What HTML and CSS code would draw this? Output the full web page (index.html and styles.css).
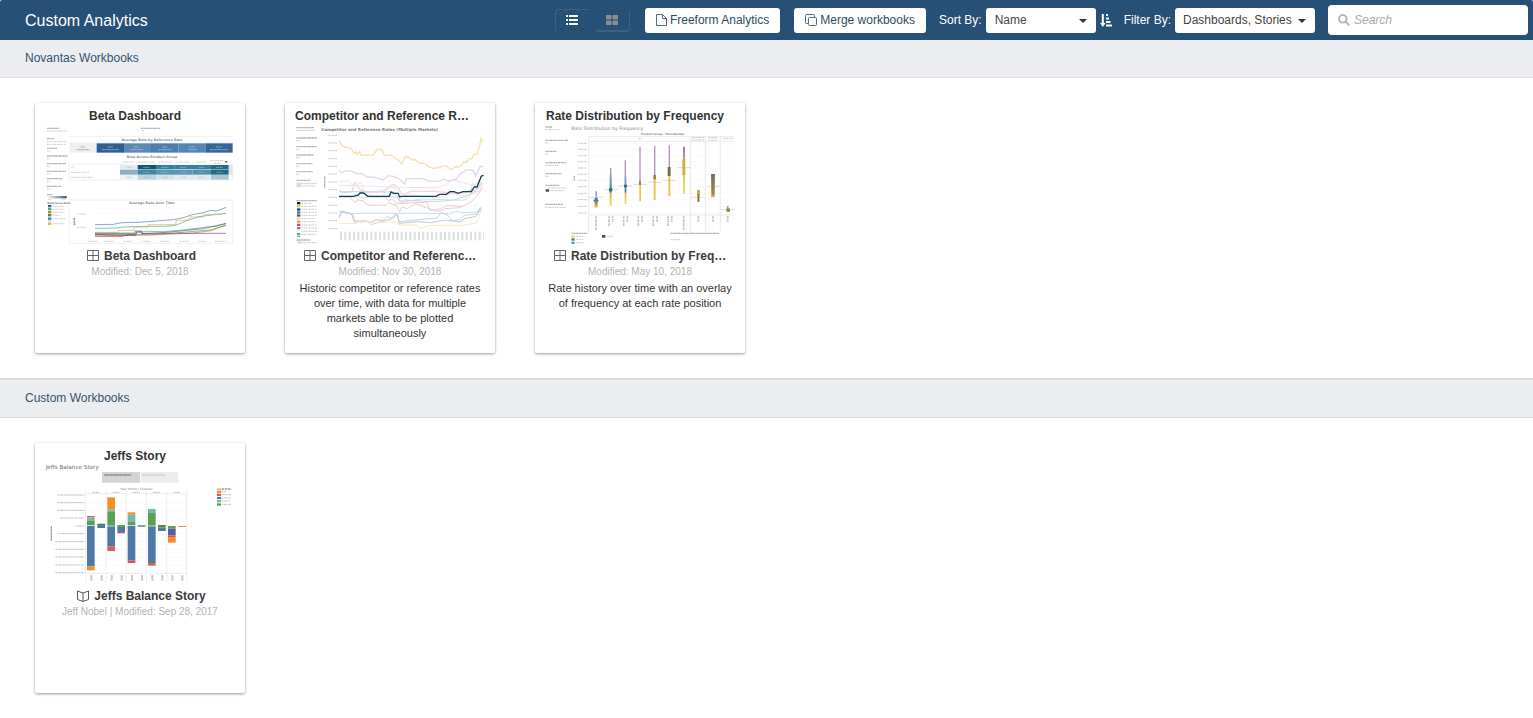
FILE: index.html
```html
<!DOCTYPE html>
<html lang="en">
<head>
<meta charset="utf-8">
<title>Custom Analytics</title>
<link rel="stylesheet" href="styles.css">
</head>
<body>
<header class="topbar">
  <h1 class="page-title">Custom Analytics</h1>
  <div class="view-toggle">
    <button class="toggle active" type="button" aria-label="List view">
      <svg width="12" height="10" viewBox="0 0 12 10" fill="#fff"><path d="M0 0h2v2H0zM3 0h9v2H3zM0 4h2v2H0zM3 4h9v2H3zM0 8h2v2H0zM3 8h9v2H3z"/></svg>
    </button>
    <button class="toggle" type="button" aria-label="Grid view">
      <svg width="12" height="10" viewBox="0 0 12 10" fill="#8c8f91"><rect width="5.5" height="4.5" rx=".7"/><rect x="6.5" width="5.5" height="4.5" rx=".7"/><rect y="5.500" width="5.500" height="4.500" rx=".7"/><rect x="6.500" y="5.500" width="5.500" height="4.500" rx=".7"/></svg>
    </button>
  </div>
  <button class="action freeform" type="button">
    <svg width="11" height="12" viewBox="0 0 11 12" fill="none" stroke="#526b82"><path d="M.5.500H6.500L10.500 4.500V11.500H.5zM6.500.500V4.500H10.500"/></svg>
    Freeform Analytics
  </button>
  <button class="action" type="button">
    <svg width="12" height="12" viewBox="0 0 12 12" fill="none" stroke="#526b82"><path d="M3 9.500H1.500a1 1 0 0 1-1-1V1.500a1 1 0 0 1 1-1H8.500a1 1 0 0 1 1 1V3"/><rect x="3.500" y="3.500" width="8" height="8" rx="1"/></svg>
    Merge workbooks
  </button>
  <div class="field">
    <label for="sort">Sort By:</label>
    <span class="picker sort">
      <select id="sort"><option>Name</option></select>
      <svg class="caret" width="8" height="4" viewBox="0 0 8 4" fill="#333"><path d="M0 0h8L4 4z"/></svg>
    </span>
    <button class="order" type="button" aria-label="Sort ascending">
      <svg width="12" height="13" viewBox="0 0 12 13" fill="#fff"><path d="M1.800 0h2v9h1.900L2.800 13 0 9h1.800zM6 0h2v2H6zM6 3.500h3v2H6zM6 7h4.500v2H6zM6 10.500h6v2H6z"/></svg>
    </button>
  </div>
  <div class="field filter-field">
    <label for="filter">Filter By:</label>
    <span class="picker filter">
      <select id="filter"><option>Dashboards, Stories</option></select>
      <svg class="caret" width="8" height="4" viewBox="0 0 8 4" fill="#333"><path d="M0 0h8L4 4z"/></svg>
    </span>
  </div>
  <label class="search">
    <svg width="12" height="12" viewBox="0 0 12 12" fill="none" stroke="#b5b5b5" stroke-width="2"><circle cx="4.800" cy="4.800" r="3.800"/><path d="M7.600 7.600L11.200 11.200"/></svg>
    <input type="text" placeholder="Search" aria-label="Search">
  </label>
</header>

<main>
<section>
  <h2 class="section-title">Novantas Workbooks</h2>
  <div class="cards">

    <article class="card">
      <h3 class="card-title">Beta Dashboard</h3>
      <svg class="thumb" viewBox="45 87 570 360" role="img" aria-label="Beta Dashboard preview">
        <g fill="none" stroke="#e8e8e8" stroke-width="2"><path d="M117 122H608M117 204H608V252H117zM117 312H608V442H117zM117 141H608"/></g>
        <g fill="none" stroke="#8b8b8b" stroke-width="4" stroke-dasharray="7 1 4 1 9 1" opacity=".65">
          <path d="M51 97H88M51 128H72M51 157H81M51 180H113M51 203H108M51 226H108M51 248H98M51 271H94M51 296H68M333 97H392"/>
        </g>
        <g fill="none" stroke="#aaa" stroke-width="3" stroke-dasharray="5 2 3 1" opacity=".6">
          <path d="M51 105H113M51 137H110M51 145H108M51 165H61M51 188H61M51 211H61M51 234H61M51 256H61M51 279H61M55 310H66M95 310H108M336 104H343"/>
          <path d="M123 213H135M123 229H178M123 244H191M278 198H314M324 198H375M386 198H425M440 198H479M500 198H529M541 194H585M553 202H572"/>
          <path d="M68 331H102M68 340H103M68 349H104M68 358H91M68 368H105M68 383H102M142 354H168M142 394H168"/>
          <path d="M175 436H202M221 436H254M280 436H306M334 436H362M389 436H416M448 436H475M504 436H528M555 436H590"/>
        </g>
        <g class="micro heading"><text x="275" y="136">Average Beta by Reference Rate</text><text x="290" y="186">Beta Across Product Group</text><text x="297" y="325">Average Rate Over Time</text></g>
        <path fill="#efefef" d="M118 142H200V170H118z"/><path fill="#2f5f91" d="M200 142H282V170H200z"/><path fill="#5b88b5" d="M282 142H363V170H282z"/><path fill="#4f7ead" d="M363 142H445V170H363z"/><path fill="#5785b3" d="M445 142H526V170H445z"/><path fill="#336596" d="M526 142H608V170H526z"/>
        <path d="M152 153H166M140 161H179" stroke="#aaa" stroke-width="3" stroke-dasharray="6 1"/>
        <path d="M232 153H248M216 161H267M312 153H328M302 161H340M396 153H412M385 161H425M478 153H494M475 161H500M558 153H576M540 161H594" stroke="#c9d8e7" stroke-width="3" stroke-dasharray="6 1" opacity=".6"/>
        <path fill="#e3ebf1" d="M270 207H323V220H270z"/><path fill="#12566f" d="M323 207H378V220H323z"/><path fill="#2f7f9e" d="M378 207H433V220H378z"/><path fill="#397f9f" d="M433 207H543V220H433z"/><path fill="#236b87" d="M543 207H596V220H543z"/>
        <path fill="#8caec2" d="M270 221H323V236H270z"/><path fill="#4285a5" d="M323 221H378V236H323z"/><path fill="#5b97b4" d="M378 221H488V236H378z"/><path fill="#4f8fac" d="M488 221H543V236H488z"/><path fill="#1d6a88" d="M543 221H596V236H543z"/>
        <path fill="#edf1f5" d="M270 237H323V251H270z"/><path fill="#bdd3df" d="M323 237H378V251H323z"/><path fill="#d5e2ea" d="M378 237H433V251H378z"/><path fill="#e0e9ee" d="M433 237H543V251H433z"/><path fill="#a9c6d5" d="M543 237H596V251H543z"/>
        <path d="M289 214H305M340 214H360M394 214H416M450 214H470M505 214H525M559 214H579M289 229H305M340 229H360M394 229H416M450 229H470M505 229H525M559 229H579M289 244H305M340 244H360M396 244H414M452 244H468M506 244H524M559 244H579" stroke="#a8bbc7" stroke-width="3" stroke-dasharray="4 1" opacity=".7"/>
        <path fill="#e5e5e5" d="M597 206H607V237H597z"/><path fill="#777" d="M585 195H592V200H585z"/>
        <defs><linearGradient id="ramp"><stop stop-color="#f1f1f1"/><stop offset="1" stop-color="#3a587c"/></linearGradient></defs>
        <path fill="url(#ramp)" d="M54 300H110V307H54z"/><text class="micro small" x="52" y="324">Reference Rate</text>
        <path fill="#31648c" d="M54 327H64V334H54z"/><path fill="#47ad75" d="M54 336H64V343H54z"/><path fill="#81992d" d="M54 345H64V352H54z"/><path fill="#966253" d="M54 354H64V361H54z"/><path fill="#2b9ccb" d="M54 364H64V372H54z"/><path fill="#a7d4e8" d="M54 373H64V376H54z"/><path fill="#f1b53d" d="M54 379H64V387H54z"/>
        <path d="M133 366V390" stroke="#999" stroke-width="5" stroke-dasharray="6 2"/>
        <path d="M195 352H595M195 390H595" stroke="#eee"/>
        <g fill="none" stroke-width="2">
          <path stroke="#5579b5" d="M195 386L250 385 276 380 324 379 380 375 430 371 460 365 487 356 520 350 543 343 560 345 588 334"/>
          <path stroke="#35a9b9" d="M195 397L260 396 280 393 354 391 405 391 437 388 470 374 507 362 544 357 588 352"/>
          <path stroke="#e8ad3c" d="M195 409H265V403H312V393H354V386H400L438 385V373H475L480 363H520V356H540L588 353"/>
          <path stroke="#db7650" d="M195 421H275L285 418 360 417 480 412 545 404 588 387"/>
          <path stroke="#b34449" d="M195 420H280L290 416H318"/>
          <path stroke="#7b8b33" d="M195 416H320L370 416 470 408 540 402 588 388"/>
          <path stroke="#49a776" d="M195 411H320L350 406 400 407 460 402 530 393 560 391 588 383"/>
          <path stroke="#38669a" d="M195 413H315V405H335V413L380 411 420 408 470 403 520 398 588 382"/>
          <path stroke="#753e8f" d="M195 415L260 418 318 418 320 407 334 407 336 412 500 412 588 412"/>
        </g>
      </svg>
      <div class="card-name">
        <svg width="12" height="12" viewBox="0 0 12 12" fill="none" stroke="#666"><path d="M.5.500H11.500V10.500H.5zM6 .5V10.500M.5 5.500H11.500"/></svg>
        <span>Beta Dashboard</span>
      </div>
      <p class="modified">Modified: Dec 5, 2018</p>
    </article>

    <article class="card">
      <h3 class="card-title">Competitor and Reference Rates (Multiple Markets)</h3>
      <svg class="thumb" viewBox="45 87 570 360" role="img" aria-label="Competitor and Reference Rates preview">
        <text class="micro wide" x="124" y="104">Competitor and Reference Rates (Multiple Markets)</text>
        <g fill="none" stroke="#8b8b8b" stroke-width="4" stroke-dasharray="7 1 4 1 9 1" opacity=".65"><path d="M49 95H103M49 126H111M49 152H111M49 177H100M49 203H97M49 227H98M49 253H91M49 314H111M49 432H91M134 241V277"/></g>
        <g fill="none" stroke="#999" stroke-width="3" stroke-dasharray="5 2 3 1" opacity=".55"><path d="M49 103H106M49 134H60M49 160H60M49 185H60M49 211H60M49 235H60M63 263H111M63 270H107M65 322H96M65 331H110M65 340H108M65 349H110M65 358H111M65 368H104M65 377H107M65 387H108M65 396H111M65 406H111M65 415H109M63 440H111M145 118H171M145 141H171M145 164H171M145 188H171M145 211H171M145 234H171M145 258H171M145 281H171M145 304H171M145 328H171M145 351H171M145 374H171M145 398H171"/></g>
        <path fill="#fff" stroke="#888" d="M51 261H61V266H51zM51 268H61V272H51zM54 437H61V442H54z"/>
        <path fill="#111e2c" d="M51 318H61V325H51z"/><path fill="#e9c447" d="M51 327H61V334H51z"/><path fill="#224c6d" d="M51 337H61V344H51z"/><path fill="#357aab" d="M51 346H61V353H51z"/><path fill="#525970" d="M51 355H61V362H51z"/><path fill="#f4c5a3" d="M51 365H61V371H51z"/><path fill="#ec8e3c" d="M51 374H61V380H51z"/><path fill="#d74458" d="M51 383H61V390H51z"/><path fill="#8c7898" d="M51 393H61V400H51z"/><path fill="#39b4a6" d="M51 411H61V418H51z"/><path fill="#c58fa5" d="M51 420H61V423H51z"/>
        <path d="M176 118H611M176 141H611M176 164H611M176 188H611M176 211H611M176 234H611M176 258H611M176 281H611M176 304H611M176 328H611M176 351H611M176 374H611M176 398H611" stroke="#f4f4f4"/>
        <g fill="none" stroke-width="4">
          <path stroke="#f4e0ae" d="M177 134L186 149 197 154 213 156 222 172 228 168 231 176 238 168 243 177 280 178 291 160H306L313 178H334L344 186 356 193 365 204 375 183H386L395 192 405 191 418 201 434 202 450 214 463 217 498 209 514 222 521 216 528 213H536L546 207 550 198H560L568 188H576L582 174 590 176 599 150 603 127 609 137"/>
          <path stroke="#dddbec" d="M177 223L186 230 197 224 217 226 230 233H245L262 243 285 244 310 252 325 239 340 241 359 249 374 264 379 248H400L425 247 448 255 475 256 490 250 508 255 528 250 543 232 561 221 579 223 587 239 601 211 609 212"/>
          <path stroke="#f0d5dc" d="M177 287H217L223 260 239 280 255 288H280L310 285 326 275 333 268 343 266 355 275 364 292 375 295 390 286H462L520 291 559 290 572 281 582 286 592 277 604 257"/>
          <path stroke="#efe4ea" stroke-width="3" d="M177 256L205 255 217 266 244 262 252 286 274 301H307L321 277 332 271 348 280 367 302 390 295 422 302 480 304 515 294 547 299 583 294 598 285 609 265M177 268L260 270 350 274 475 275 504 263 515 250 568 266 608 260"/>
          <path stroke="#f2c8cd" stroke-width="3" d="M177 304H210L226 321 231 311 250 315 260 327 316 328 326 320 339 325 350 329 359 348 366 332 382 338 405 323 445 337 460 344 480 346 494 338 540 335 574 317 592 298 608 274M315 301L325 314 337 309 349 323 440 318 450 343 480 339 500 328 548 331"/>
          <path stroke="#c6e1e8" stroke-width="3" d="M177 346L205 353 252 352 320 352H440L505 353 527 346 553 350 590 348 606 335M177 303H354L364 319 422 309 478 311 550 313 570 301 577 263 590 271 605 239"/>
          <path stroke="#c3d7e4" stroke-width="3" d="M177 284L190 290 220 287 260 287 310 288 343 288 360 318 372 312 440 316 480 316 520 312 560 300 576 290 590 286 606 262M177 368L185 345 217 354 225 376 233 373 243 379 259 373 274 386 308 376 320 362 335 366 343 356 353 355 358 378 386 374 433 369 470 367 485 349 505 359 516 374 540 371 552 358 590 354 602 333"/>
          <path stroke="#c6c8d2" stroke-width="3" d="M178 361L185 347 214 353 224 380 246 374 272 379 288 371 309 375 334 369 351 356 358 382 411 377 452 380 497 372 540 378 554 368 588 361 603 338"/>
          <path stroke="#f8e5ca" stroke-width="3" d="M177 382H225L246 373 270 379 350 378 357 387H408L419 397 452 388H552L590 381 603 344 609 338"/>
          <path stroke="#173d5c" d="M177 301H221L229 298 234 298 240 291H251L263 301H328L333 288 341 292H354L359 303 364 301H468L479 295H499L510 287H522L534 292 549 287H574L583 273H591L599 253 604 240 611 238"/>
        </g>
        <path d="M180 420H611" stroke="#bbb" stroke-width="26" stroke-dasharray="6 7" opacity=".55"/>
        <path d="M180 413H611M180 421H611M180 429H611" stroke="#fff" stroke-width="1"/>
      </svg>
      <div class="card-name">
        <svg width="12" height="12" viewBox="0 0 12 12" fill="none" stroke="#666"><path d="M.5.500H11.500V10.500H.5zM6 .5V10.500M.5 5.500H11.500"/></svg>
        <span>Competitor and Reference Rates</span>
      </div>
      <p class="modified">Modified: Nov 30, 2018</p>
      <p class="description">Historic competitor or reference rates over time, with data for multiple markets able to be plotted simultaneously</p>
    </article>

    <article class="card">
      <h3 class="card-title">Rate Distribution by Frequency</h3>
      <svg class="thumb" viewBox="45 87 570 360" role="img" aria-label="Rate Distribution by Frequency preview">
        <defs>
          <linearGradient id="mix" x2="0" y2="1"><stop stop-color="#bca0c7"/><stop offset=".33" stop-color="#4b9aba"/><stop offset=".55" stop-color="#3f728c"/><stop offset=".6" stop-color="#e0b440"/><stop offset="1" stop-color="#f6db79"/></linearGradient>
          <linearGradient id="high" x2="0" y2="1"><stop stop-color="#a77aac"/><stop offset=".25" stop-color="#b98fa0"/><stop offset=".3" stop-color="#e0b440"/><stop offset="1" stop-color="#f6db79"/></linearGradient>
          <linearGradient id="low" x2="0" y2="1"><stop stop-color="#6c7d6a"/><stop offset=".3" stop-color="#b08e48"/><stop offset="1" stop-color="#efc955"/></linearGradient>
        </defs>
        <text class="micro large" x="124" y="102">Rate Distribution by Frequency</text>
        <text class="micro small" x="333" y="116">Product Group / Term Bucket</text>
        <path fill="none" stroke="#dedede" stroke-width="2" d="M176 122H611M176 136H611M176 357H611M176 122V405M482 122V405M526 122V405M571 122V405"/>
        <path d="M176 142H611M176 160H611M176 179H611M176 197H611M176 216H611M176 235H611M176 253H611M176 272H611M176 292H611M176 311H611M176 331H611M176 351H611" stroke="#f0f0f0"/>
        <g fill="none" stroke="#8b8b8b" stroke-width="4" stroke-dasharray="7 1 4 1 9 1" opacity=".65"><path d="M46 93H66M46 133H114M46 166H80M46 200H109M46 233H95M46 268H88M46 325H99M124 412H173M421 412H568M133 239V254"/></g>
        <g fill="none" stroke="#999" stroke-width="3" stroke-dasharray="5 2 3 1" opacity=".55"><path d="M46 101H89M46 141H57M46 174H57M46 208H85M46 241H57M55 276H110M58 284H104M46 334H109M138 421H161M138 430H161M138 440H161M230 421H250M423 431H450M326 128H336M486 125H522M486 132H522M535 125H562M535 132H562M578 128H610M143 142H172M143 160H172M143 179H172M143 197H172M143 216H172M143 235H172M143 253H172M143 272H172M143 292H172M143 311H172M143 331H172M143 351H172"/></g>
        <path fill="#464b50" d="M47 280H57V287H47zM216 417H226V425H216z"/><path fill="#f1d580" d="M124 418H134V425H124z"/><path fill="#617b70" d="M124 427H134V434H124z"/><path fill="#38a4c7" d="M124 437H134V444H124z"/>
        <path fill="#a8a4c6" d="M196 286H201V311H196z"/><path fill="#52758a" d="M194 306H203V311H194zM191 311H205V317H191z"/><path fill="url(#low)" d="M194 317H203V335H194z"/>
        <g fill="none" stroke="#b48fba" stroke-width="4"><path d="M242 216V260M286 193V260M330 152V260M374 149V240M418 148V215"/></g>
        <path fill="url(#mix)" d="M239 235H245V330H239zM284 240H289V325H284z"/><path fill="#315971" d="M237 277H247V285H237zM282 266H291V274H282z"/>
        <path fill="#eec451" d="M328 264H333V316H328zM371 247H377V312H371zM415 238H421V300H415z"/><path fill="#9c853d" d="M327 254H333V267H327zM370 237H378V250H370z"/><path fill="#727347" d="M413 213H422V240H413z"/>
        <path fill="url(#high)" d="M459 152H465V294H459z"/><path fill="#d5af46" d="M457 189H466V237H457z"/><path fill="url(#low)" d="M501 282H510V318H501zM543 234H555V304H543z"/><path stroke="#466a7d" stroke-width="3" d="M549 236V298M505 294V317"/><path fill="#50797d" d="M592 330H595V338H592z"/><path fill="#888052" d="M589 337H600V347H589z"/>
        <path d="M176 304H217M222 280H263M265 270H306M309 265H351M354 259H395M399 253H438M442 215H482M484 304H523M530 271H569M572 341H614" stroke="#999"/>
        <path d="M198 361V403M237 361V390M248 361V377M281 361V390M292 361V377M325 361V390M336 361V377M370 361V390M381 361V377M414 361V390M425 361V377M461 361V403M505 361V377M549 361V377M593 361V377" stroke="#bbb" stroke-width="5" stroke-dasharray="5 2 3 2"/>
      </svg>
      <div class="card-name">
        <svg width="12" height="12" viewBox="0 0 12 12" fill="none" stroke="#666"><path d="M.5.500H11.500V10.500H.5zM6 .5V10.500M.5 5.500H11.500"/></svg>
        <span>Rate Distribution by Frequency</span>
      </div>
      <p class="modified">Modified: May 10, 2018</p>
      <p class="description">Rate history over time with an overlay of frequency at each rate position</p>
    </article>
  </div>
</section>

<section>
  <h2 class="section-title divided">Custom Workbooks</h2>
  <div class="cards">
    <article class="card">
      <h3 class="card-title">Jeffs Story</h3>
      <svg class="thumb" viewBox="45 87 570 360" role="img" aria-label="Jeffs Balance Story preview">
        <text class="micro story" x="47" y="99">Jeffs Balance Story</text>
        <path fill="#d4d4d4" d="M216 108H330V140H216z"/><path fill="#ededed" d="M332 108H445V140H332z"/>
        <path stroke="#888" stroke-width="4" stroke-dasharray="8 1 5 1" d="M223 117H304"/><path stroke="#bbb" stroke-width="3" stroke-dasharray="6 1 4 1" d="M338 117H406"/>
        <text class="micro" x="271" y="162">Year Month / Channel</text>
        <g stroke="#aaa" stroke-width="3" stroke-dasharray="6 1 3 1" fill="none" opacity=".75"><path d="M187 169H209M248 169H270M308 169H330M369 169H391M430 169H452M82 177H163M82 200H163M82 223H163M91 246H163M137 270H163M85 293H163M76 317H163M76 340H163M76 363H163M76 387H163M76 410H163M575 167H588M575 176H604M575 186H602M575 195H600M575 205H604"/></g>
        <path stroke="#999" stroke-width="4" stroke-dasharray="7 2" d="M64 271V314M575 159H604"/>
        <path fill="none" stroke="#ddd" stroke-width="1.500" d="M167 163V440M228 163V440M289 163V440M349 163V440M410 163V440M470 163V440M167 173H470M167 412H470"/>
        <path d="M167 200H470M167 223H470M167 246H470M167 293H470M167 317H470M167 340H470M167 363H470M167 387H470" stroke="#eee"/>
        <path fill="#e15759" d="M171 240H194V244H171z"/><path fill="#76b7b2" d="M171 244H194V255H171z"/><path fill="#59a14f" d="M171 255H194V268H171z"/><path fill="#4e79a7" d="M171 270H194V391H171z"/><path fill="#f28e2b" d="M171 391H194V403H171z"/>
        <path fill="#59823e" d="M202 263H225V267H202z"/><path fill="#4e79a7" d="M202 267H225V276H202z"/>
        <path fill="#f28e2b" d="M232 184H255V221H232z"/><path fill="#76b7b2" d="M232 221H255V228H232z"/><path fill="#59a14f" d="M232 228H255V269H232z"/><path fill="#4e79a7" d="M232 271H255V332H232z"/><path fill="#e15767" d="M232 332H255V345H232z"/>
        <path fill="#59a14f" d="M262 267H285V273H262z"/><path fill="#4e79a7" d="M262 273H285V288H262z"/><path fill="#c9577e" d="M262 288H285V292H262z"/>
        <path fill="#f28e2b" d="M293 229H316V236H293z"/><path fill="#76b7b2" d="M293 236H316V258H293z"/><path fill="#59a14f" d="M293 258H316V268H293z"/><path fill="#4e79a7" d="M293 270H316V373H293z"/><path fill="#d75060" d="M293 373H316V381H293z"/>
        <path fill="#466e7d" d="M323 268H346V272H323z"/><path fill="#76b7b2" d="M354 219H377V231H354z"/><path fill="#59a14f" d="M354 231H377V269H354z"/><path fill="#4e79a7" d="M354 271H377V381H354z"/><path fill="#d7663f" d="M354 381H377V389H354z"/>
        <path fill="#638449" d="M384 267H407V275H384z"/><path fill="#4e79a7" d="M384 275H407V285H384z"/><path fill="#59a14f" d="M414 270H437V278H414z"/><path fill="#565f9d" d="M414 278H437V298H414z"/><path fill="#d15556" d="M414 298H437V303H414z"/><path fill="#f28e2b" d="M414 303H437V320H414z"/><path fill="#d99567" d="M445 270H469V273H445z"/>
        <path stroke="#bbb" stroke-width="6" stroke-dasharray="4 1" d="M184 418V434M215 418V434M245 418V434M275 418V434M306 418V434M336 418V434M367 418V434M397 418V434M427 418V434M457 418V434"/>
        <path fill="#f3b368" d="M561 157H573V162H561z"/><path fill="#f28e2b" d="M561 164H573V171H561z"/><path fill="#e15759" d="M561 173H573V180H561z"/><path fill="#4e79a7" d="M561 183H573V189H561z"/><path fill="#76b7b2" d="M561 192H573V199H561z"/><path fill="#59a14f" d="M561 202H573V209H561z"/>
      </svg>
      <div class="card-name">
        <svg width="12" height="12" viewBox="0 0 12 12" fill="none" stroke="#555"><path d="M.5 1L6 3 11.500 1V9.500L6 11.500.5 9.500zM6 3V11.500"/></svg>
        <span>Jeffs Balance Story</span>
      </div>
      <p class="modified">Jeff Nobel | Modified: Sep 28, 2017</p>
    </article>
  </div>
</section>
</main>
</body>
</html>
```
FILE: styles.css
```css
* { box-sizing: border-box; }
body {
  margin: 0;
  background: #fff;
  color: #333;
  font: 12px/15px "Liberation Sans", Arial, sans-serif;
}
h1, h2, h3, p { margin: 0; }
button, input, select { font: inherit; }
svg { display: block; flex: none; }

.topbar {
  display: flex;
  align-items: center;
  height: 40px;
  padding: 0 5px 0 25px;
  background: #265075;
  color: #fff;
  border-radius: 2px 2px 0 0;
}
.page-title {
  margin-right: auto;
  padding-top: 2px;
  font-size: 16px;
  line-height: 20px;
  font-weight: 400;
}
.view-toggle { display: flex; gap: 5px; margin-right: 15px; }
.toggle {
  display: flex;
  align-items: center;
  justify-content: center;
  width: 35px;
  height: 23px;
  padding: 0;
  background: transparent;
  border: 1px solid transparent;
  border-right-color: #3a6287;
  border-bottom: 2px solid #3a6287;
  border-radius: 3px;
}
.toggle.active {
  border-color: #3a6287 transparent transparent #3a6287;
  border-bottom-width: 1px;
}
.action {
  display: flex;
  align-items: center;
  gap: 3px;
  height: 25px;
  padding: 0 11px;
  background: #fff;
  color: #2b4c68;
  border: 0;
  border-radius: 3px;
  white-space: nowrap;
}
.freeform { margin-right: 14px; }
.field {
  display: flex;
  align-items: center;
  gap: 4px;
  margin-left: 13px;
  white-space: nowrap;
}
.field.filter-field { margin-left: 12px; }
.picker { position: relative; }
.picker.sort { width: 110px; }
.picker.filter { width: 140px; }
.picker select {
  display: block;
  width: 100%;
  height: 25px;
  padding: 0 20px 0 9px;
  appearance: none;
  background: #fff;
  color: #444;
  border: 0;
  border-radius: 3px;
}
.picker.filter select { padding-left: 8px; }
.caret {
  position: absolute;
  right: 9px;
  top: 11px;
  pointer-events: none;
}
.order { padding: 0; background: none; border: 0; }
.search {
  display: flex;
  align-items: center;
  gap: 4px;
  width: 200px;
  height: 30px;
  margin-left: 13px;
  padding: 0 10px;
  background: #fff;
  border-radius: 4px;
}
.search input {
  flex: 1;
  min-width: 0;
  padding: 0;
  border: 0;
  outline: 0;
  background: none;
}
.search input::placeholder { color: #aaa; font-style: italic; opacity: 1; }

.section-title {
  padding: 11px 25px;
  background: #ecedf0;
  border-bottom: 1px solid #d9dbdf;
  color: #34546e;
  font-size: 12px;
  line-height: 15px;
  font-weight: 400;
}
.section-title.divided { border-top: 2px solid #dbdce1; }
.cards {
  display: flex;
  flex-wrap: wrap;
  gap: 40px;
  padding: 25px 35px;
}
.card {
  width: 210px;
  min-height: 250px;
  padding: 6px 10px 10px;
  border-radius: 2px;
  box-shadow: 0 1px 3px rgba(0, 0, 0, .4);
  text-align: center;
}
.card-title {
  margin: 0 10px 1px 0;
  overflow: hidden;
  text-overflow: ellipsis;
  white-space: nowrap;
  font-size: 12px;
  line-height: 15px;
}
.thumb { width: 100%; height: auto; }
.card-name {
  display: flex;
  align-items: center;
  justify-content: center;
  gap: 5px;
  margin-top: 3px;
  padding-left: 3px;
  line-height: 16px;
  font-weight: 700;
  color: #3c3c3c;
}
.card-name span {
  max-width: 158px;
  overflow: hidden;
  text-overflow: ellipsis;
  white-space: nowrap;
}
.modified { color: #b3b3b3; font-size: 10px; line-height: 15px; }
.description { margin-top: 2px; font-size: 11px; line-height: 15px; }

.micro { font-family: "DejaVu Sans", sans-serif; font-size: 9px; fill: #888; }
.micro.small { font-weight: 700; font-size: 8px; }
.micro.heading text { font-weight: 700; font-size: 10px; }
.micro.wide { font-weight: 700; font-size: 12px; fill: #777; }
.micro.large { font-size: 14px; }
.micro.story { font-size: 17px; fill: #666; }
```
